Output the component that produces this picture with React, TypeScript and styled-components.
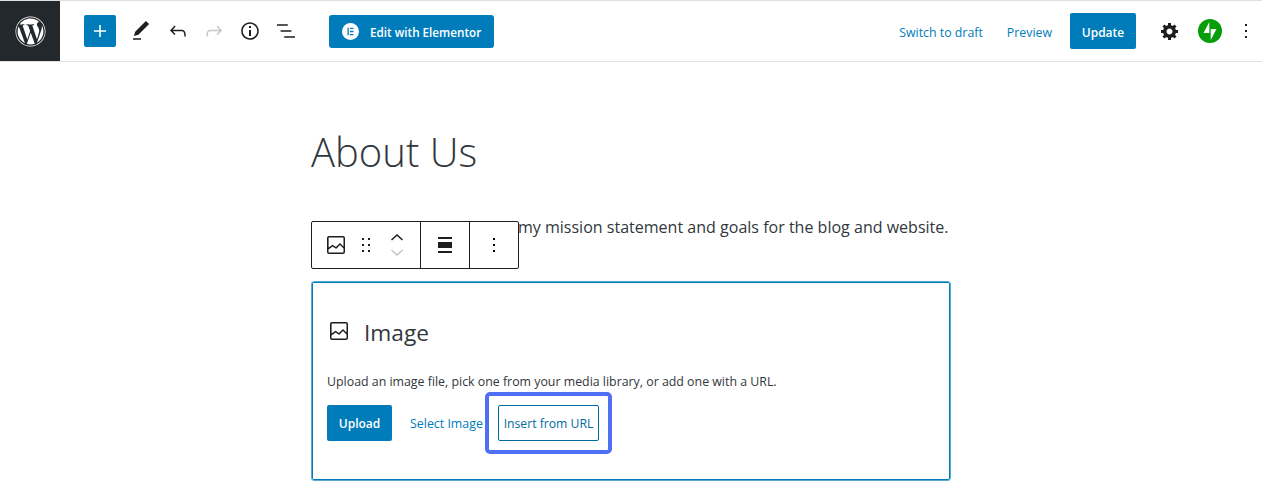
import React from 'react';
import styled, { createGlobalStyle } from 'styled-components';
import { FaWordpress } from 'react-icons/fa';

const Global = createGlobalStyle`
  html, body { margin: 0; padding: 0; background: #fff; }
  body { font-family: "Open Sans", "Noto Sans", sans-serif; overflow: hidden; }
  *, *::before, *::after { box-sizing: border-box; }
`;
const Page = styled.div`width: 1262px; height: 491px; overflow: hidden; background: #fff;`;
const Header = styled.header`
  height: 62px; display: flex; align-items: center;
  border-top: 1px solid #e0e0e0; border-bottom: 1px solid #e0e0e0;
  padding-right: 2px;
`;
const LogoTile = styled.div`
  width: 60px; height: 60px; background: #23282d; color: #fff;
  display: flex; align-items: center; justify-content: center; margin-right: 24px;
`;
const PlusButton = styled.div`
  width: 32px; height: 32px; background: #007cba; border-radius: 2px; color: #fff;
  display: flex; align-items: center; justify-content: center; margin-right: 7px;
`;
const IconSlot = styled.div<{ $w?: number; $c?: string }>`
  width: ${p => p.$w ?? 36}px; height: 36px; display: flex; align-items: center; justify-content: center;
  color: ${p => p.$c ?? '#1e1e1e'}; flex: none;
`;
const ElementorButton = styled.div`
  margin-left: 25px; width: 165px; height: 33px; background: #007cba; border-radius: 3px; color: #fff;
  display: flex; align-items: center; padding-left: 13px; gap: 11px;
  font-size: 11.7px; font-weight: 600;
  span { padding-top: 1px; }
`;
const Spacer = styled.div`flex: 1;`;
const TopLink = styled.span<{ $ml: number }>`
  color: #007cba; font-size: 12.35px; margin-left: ${p => p.$ml}px; white-space: nowrap; padding-top: 2px;
`;
const UpdateButton = styled.div`
  margin-left: 18px; margin-right: 16px; width: 66px; height: 36px; background: #007cba; color: #fff; border-radius: 2px;
  display: flex; align-items: center; justify-content: center; font-size: 12px; font-weight: 600; padding-top: 2px;
`;
const Canvas = styled.main`width: 640px; margin-left: 311px; padding-top: 64px;`;
const Title = styled.h1`
  margin: 0; font-weight: 300; font-size: 40px; line-height: 52px; color: #32373c;
`;
const ParagraphWrap = styled.div`position: relative; margin-top: 36px; height: 67px;`;
const Paragraph = styled.p`
  margin: 0; padding-left: 2px; font-size: 16.05px; line-height: 26px; color: #32373c; white-space: nowrap;
`;
const BlockToolbar = styled.div`
  position: absolute; left: 0; top: 7px; height: 48px; width: 208px; background: #fff;
  border: 1px solid #1e1e1e; border-radius: 2px; display: flex;
`;
const ToolGroup = styled.div<{ $w: number; $last?: boolean }>`
  width: ${p => p.$w}px; display: flex; align-items: center;
  justify-content: ${p => p.$last ? 'center' : 'flex-start'};
  border-right: ${p => p.$last ? 'none' : '1px solid #1e1e1e'};
  flex: none;
`;
const ToolIcon = styled.div<{ $w: number }>`
  width: ${p => p.$w}px; display: flex; justify-content: center; align-items: center; flex: none; color: #1e1e1e;
  svg { flex: none; }
`;
const Movers = styled.div`
  display: flex; flex-direction: column; align-items: center; gap: 4px; width: 30px; margin-left: 10px; flex: none;
`;
const Placeholder = styled.section`
  height: 200px; border: 1px solid #5aa9d3; box-shadow: inset 0 0 0 1px #007cba; border-radius: 3px; padding: 26px 15px 0 15px;
`;
const PlaceholderLabel = styled.div`
  display: flex; align-items: center; height: 48px; color: #32373c; font-size: 22.7px;
`;
const LabelIcon = styled.div`width: 37px; display: flex; margin-top: -2px; color: #1e1e1e;`;
const Instructions = styled.p`
  margin: 17px 0 0 0; font-size: 12.36px; line-height: 18px; color: #32373c; white-space: nowrap;
`;
const Actions = styled.div`display: flex; align-items: center; margin-top: 14px;`;
const UploadButton = styled.div`
  width: 65px; height: 36px; background: #007cba; color: #fff; border-radius: 2px;
  display: flex; align-items: center; justify-content: center; font-size: 12px; font-weight: 600;
`;
const SelectLink = styled.span`margin-left: 18px; width: 88px; color: #007cba; font-size: 12.4px; white-space: nowrap;`;
const UrlButton = styled.div`
  position: relative; width: 101px; height: 36px; border: 1px solid #006ba1; border-radius: 2px; color: #006ba1;
  display: flex; align-items: center; justify-content: center; font-size: 12.2px; white-space: nowrap;
  &::after {
    content: ''; position: absolute; left: -14px; top: -14px; width: 127px; height: 62px;
    border: 4px solid #4f6ff5; border-radius: 5px;
  }
`;

const I = ({ d, s = 24, vb = 24 }: { d: string; s?: number; vb?: number }) => (
  <svg width={s} height={s} viewBox={`0 0 ${vb} ${vb}`} fill="currentColor"><path d={d} /></svg>
);
const P = {
  plus: 'M18 11.2h-5.2V6h-1.6v5.2H6v1.6h5.2V18h1.6v-5.2H18z',
  edit: 'M20.1 5.1L16.9 2 6.2 12.7l-1.3 4.4 4.5-1.3L20.1 5.1zM4 20.8h8v-1.5H4v1.5z',
  undo: 'M18.3 11.7c-.6-.6-1.4-.9-2.3-.9H6.7l2.9-3.3-1.1-1-4.5 5L8.5 16l1-1-2.7-2.7H16c.5 0 .9.2 1.3.5 1 1 1 3.4 1 4.5v.3h1.5v-.2c0-1.5 0-4.3-1.5-5.7z',
  redo: 'M15.6 6.5l-1.1 1 2.9 3.3H8c-.9 0-1.7.3-2.3.9-1.4 1.5-1.4 4.2-1.4 5.6v.2h1.5v-.3c0-1.1 0-3.5 1-4.5.3-.3.7-.5 1.3-.5h9.2L14.5 15l1.1 1.1 4.6-4.6-4.6-5z',
  info: 'M12 3.2c-4.8 0-8.8 3.9-8.8 8.8 0 4.8 3.9 8.8 8.8 8.8 4.8 0 8.8-3.9 8.8-8.8 0-4.8-4-8.8-8.8-8.8zm0 16c-4 0-7.2-3.3-7.2-7.2C4.8 8 8 4.8 12 4.8s7.2 3.3 7.2 7.2c0 4-3.2 7.2-7.2 7.2zM11 17h2v-6h-2v6zm0-8h2V7h-2v2z',
  list: 'M13.8 5.2H3v1.5h10.8V5.2zm-3.6 12v1.5H21v-1.5H10.2zm7.2-6H6.6v1.5h10.8v-1.5z',
  cog: 'M18 12h-2.18c-.17.7-.44 1.35-.81 1.93l1.54 1.54-2.1 2.1-1.54-1.54c-.58.36-1.23.63-1.91.79V19H8v-2.18c-.68-.16-1.33-.43-1.91-.79l-1.54 1.54-2.12-2.12 1.54-1.54c-.36-.58-.63-1.23-.79-1.91H1V9.03h2.17c.16-.7.44-1.35.8-1.94L2.43 5.55l2.1-2.1 1.54 1.54c.58-.37 1.24-.64 1.93-.81V2h3v2.18c.68.16 1.33.43 1.91.79l1.54-1.54 2.12 2.12-1.54 1.54c.36.59.64 1.24.8 1.94H18V12zm-8.5 1.5c1.66 0 3-1.34 3-3s-1.34-3-3-3-3 1.34-3 3 1.34 3 3 3z',
  more: 'M13 19h-2v-2h2v2zm0-6h-2v-2h2v2zm0-6h-2V5h2v2z',
  image: 'M19 3H5c-1.1 0-2 .9-2 2v14c0 1.1.9 2 2 2h14c1.1 0 2-.9 2-2V5c0-1.1-.9-2-2-2zM5 4.5h14c.3 0 .5.2.5.5v8.4l-3-2.9c-.3-.3-.8-.3-1 0L11.9 14 9 12c-.3-.2-.6-.2-.8 0l-3.6 2.6V5c-.1-.3.1-.5.4-.5zm14 15H5c-.3 0-.5-.2-.5-.5v-2.4l4.1-3 3 1.9c.3.2.7.2.9-.1L16 12l3.5 3.4V19c0 .3-.2.5-.5.5z',
  drag: 'M8 7h2V5H8v2zm0 6h2v-2H8v2zm0 6h2v-2H8v2zm6-14v2h2V5h-2zm0 8h2v-2h-2v2zm0 6h2v-2h-2v2z',
  align: 'M5 4h14v2H5zM5 9h14v6H5zM5 18h14v2H5z',
};
const Chevron = ({ up, color }: { up?: boolean; color: string }) => (
  <svg width="18" height="12" viewBox="0 0 18 12" fill="none" stroke={color} strokeWidth="1.5">
    <path d={up ? 'M3.500 9L9 4l5.500 5' : 'M3.500 3l5.500 5 5.500-5'} />
  </svg>
);
const ElementorMark = () => (
  <svg width="17" height="17" viewBox="0 0 17 17">
    <circle cx="8.5" cy="8.5" r="8.5" fill="#fff" />
    <path d="M5.500 4.800h1.300v7.400H5.500zM8 4.800h3.500v1.300H8zM8 7.850h3.500v1.300H8zM8 10.900h3.500v1.300H8z" fill="#007cba" />
  </svg>
);
const JetpackMark = () => (
  <svg width="24" height="24" viewBox="0 0 24 24">
    <circle cx="12" cy="12" r="12" fill="#069e08" />
    <path d="M12.700 10v11l5.800-11zM11.300 14V3L5.500 14z" fill="#fff" />
  </svg>
);

export default function App() {
  return (
    <Page>
      <Global />
      <Header>
        <LogoTile><FaWordpress size={31} /></LogoTile>
        <PlusButton><I d={P.plus} /></PlusButton>
        <IconSlot><I d={P.edit} /></IconSlot>
        <IconSlot $w={37}><I d={P.undo} /></IconSlot>
        <IconSlot $c="#c8c8c8"><I d={P.redo} /></IconSlot>
        <IconSlot><I d={P.info} /></IconSlot>
        <IconSlot><I d={P.list} /></IconSlot>
        <ElementorButton><ElementorMark /><span>Edit with Elementor</span></ElementorButton>
        <Spacer />
        <TopLink $ml={0}>Switch to draft</TopLink>
        <TopLink $ml={24}>Preview</TopLink>
        <UpdateButton>Update</UpdateButton>
        <IconSlot><I d={P.cog} s={20} vb={20} /></IconSlot>
        <IconSlot $w={44}><JetpackMark /></IconSlot>
        <IconSlot $w={28}><I d={P.more} /></IconSlot>
      </Header>
      <Canvas>
        <Title>About Us</Title>
        <ParagraphWrap>
          <Paragraph>This is where I shall outline my mission statement and goals for the blog and website.</Paragraph>
          <BlockToolbar>
            <ToolGroup $w={109}>
              <ToolIcon $w={48}><I d={P.image} /></ToolIcon>
              <ToolIcon $w={12}><I d={P.drag} /></ToolIcon>
              <Movers>
                <Chevron up color="#1e1e1e" />
                <Chevron color="#c4c4c4" />
              </Movers>
            </ToolGroup>
            <ToolGroup $w={49}><ToolIcon $w={48}><I d={P.align} /></ToolIcon></ToolGroup>
            <ToolGroup $w={48} $last><I d={P.more} /></ToolGroup>
          </BlockToolbar>
        </ParagraphWrap>
        <Placeholder>
          <PlaceholderLabel>
            <LabelIcon><I d={P.image} /></LabelIcon>
            <span>Image</span>
          </PlaceholderLabel>
          <Instructions>Upload an image file, pick one from your media library, or add one with a URL.</Instructions>
          <Actions>
            <UploadButton>Upload</UploadButton>
            <SelectLink>Select Image</SelectLink>
            <UrlButton>Insert from URL</UrlButton>
          </Actions>
        </Placeholder>
      </Canvas>
    </Page>
  );
}
